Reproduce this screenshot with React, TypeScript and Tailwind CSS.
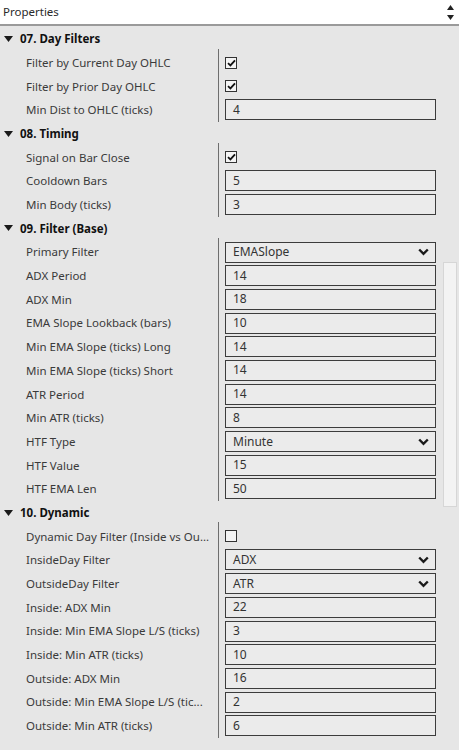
import React from "react";

type Row =
  | { label: string; kind: "check"; checked: boolean }
  | { label: string; kind: "text"; value: string }
  | { label: string; kind: "select"; value: string };

type Section = { title: string; rows: Row[] };

const sections: Section[] = [
  {
    title: "07. Day Filters",
    rows: [
      { label: "Filter by Current Day OHLC", kind: "check", checked: true },
      { label: "Filter by Prior Day OHLC", kind: "check", checked: true },
      { label: "Min Dist to OHLC (ticks)", kind: "text", value: "4" },
    ],
  },
  {
    title: "08. Timing",
    rows: [
      { label: "Signal on Bar Close", kind: "check", checked: true },
      { label: "Cooldown Bars", kind: "text", value: "5" },
      { label: "Min Body (ticks)", kind: "text", value: "3" },
    ],
  },
  {
    title: "09. Filter (Base)",
    rows: [
      { label: "Primary Filter", kind: "select", value: "EMASlope" },
      { label: "ADX Period", kind: "text", value: "14" },
      { label: "ADX Min", kind: "text", value: "18" },
      { label: "EMA Slope Lookback (bars)", kind: "text", value: "10" },
      { label: "Min EMA Slope (ticks) Long", kind: "text", value: "14" },
      { label: "Min EMA Slope (ticks) Short", kind: "text", value: "14" },
      { label: "ATR Period", kind: "text", value: "14" },
      { label: "Min ATR (ticks)", kind: "text", value: "8" },
      { label: "HTF Type", kind: "select", value: "Minute" },
      { label: "HTF Value", kind: "text", value: "15" },
      { label: "HTF EMA Len", kind: "text", value: "50" },
    ],
  },
  {
    title: "10. Dynamic",
    rows: [
      { label: "Dynamic Day Filter (Inside vs Ou...", kind: "check", checked: false },
      { label: "InsideDay Filter", kind: "select", value: "ADX" },
      { label: "OutsideDay Filter", kind: "select", value: "ATR" },
      { label: "Inside: ADX Min", kind: "text", value: "22" },
      { label: "Inside: Min EMA Slope L/S (ticks)", kind: "text", value: "3" },
      { label: "Inside: Min ATR (ticks)", kind: "text", value: "10" },
      { label: "Outside: ADX Min", kind: "text", value: "16" },
      { label: "Outside: Min EMA Slope L/S (tic...", kind: "text", value: "2" },
      { label: "Outside: Min ATR (ticks)", kind: "text", value: "6" },
    ],
  },
];

function Chevron() {
  return (
    <svg width="11" height="8" viewBox="0 0 11 8" className="shrink-0">
      <path d="M1.2 1.5 L5.5 5.8 L9.8 1.5" fill="none" stroke="#1a1a1a" strokeWidth="2.4" />
    </svg>
  );
}

function Check({ checked }: { checked: boolean }) {
  return (
    <div className="w-[12px] h-[12px] border border-[#333] bg-[#f4f4f4] flex items-center justify-center">
      {checked && (
        <svg width="9" height="8" viewBox="0 0 9 8">
          <path d="M1 4.2 L3.4 6.4 L8 1.4" fill="none" stroke="#111" strokeWidth="1.8" />
        </svg>
      )}
    </div>
  );
}

function Value({ row }: { row: Row }) {
  if (row.kind === "check") {
    return (
      <div className="h-full flex items-center">
        <Check checked={row.checked} />
      </div>
    );
  }
  return (
    <div className="h-full flex items-center">
      <div className="w-[211px] h-[21px] border border-[#3c3c3c] bg-[#ebebeb] flex items-center justify-between pl-[7px] pr-[6px] text-[12px] text-[#333]">
        <span>{row.value}</span>
        {row.kind === "select" && <Chevron />}
      </div>
    </div>
  );
}

export default function App() {
  return (
    <div
      className="w-[459px] h-[750px] overflow-hidden bg-[#e6e6e6] relative"
      style={{ fontFamily: '"Noto Sans", "Open Sans", sans-serif' }}
    >
      <div className="h-[26px] bg-white border-b-2 border-[#9a9a9a] flex items-center justify-between pl-[3px] pr-[5px]">
        <span className="text-[11.5px] text-[#2a2a2a]">Properties</span>
        <div className="flex flex-col items-center gap-[5px]">
          <svg width="7" height="5" viewBox="0 0 7 5">
            <path d="M0 5 L3.5 0 L7 5 Z" fill="#222" />
          </svg>
          <svg width="7" height="5" viewBox="0 0 7 5">
            <path d="M0 0 L7 0 L3.5 5 Z" fill="#222" />
          </svg>
        </div>
      </div>
      <div className="pt-[1px]">
        {sections.map((s) => (
          <div key={s.title}>
            <div className="h-[23.7px] flex items-center">
              <svg width="9" height="6" viewBox="0 0 9 6" className="ml-[4px] mr-[7px]">
                <path d="M0 0 L9 0 L4.5 6 Z" fill="#1a1a1a" />
              </svg>
              <span className="text-[11.5px] font-bold text-[#111]">{s.title}</span>
            </div>
            <div className="flex">
              <div className="w-[218px] shrink-0">
                {s.rows.map((r) => (
                  <div
                    key={r.label}
                    className="h-[23.7px] flex items-center pl-[26px] text-[11.5px] text-[#3a3a3a] whitespace-nowrap overflow-hidden"
                  >
                    {r.label}
                  </div>
                ))}
              </div>
              <div className="border-l border-[#6e6e6e] pl-[6px] -mt-[2px] pt-[2px]">
                {s.rows.map((r) => (
                  <div key={r.label} className="h-[23.7px]">
                    <Value row={r} />
                  </div>
                ))}
              </div>
            </div>
          </div>
        ))}
      </div>
      <div className="absolute left-[443px] top-[262px] w-[14px] h-[245px] bg-[#f3f3f3] border border-[#d6d6d6]" />
    </div>
  );
}
